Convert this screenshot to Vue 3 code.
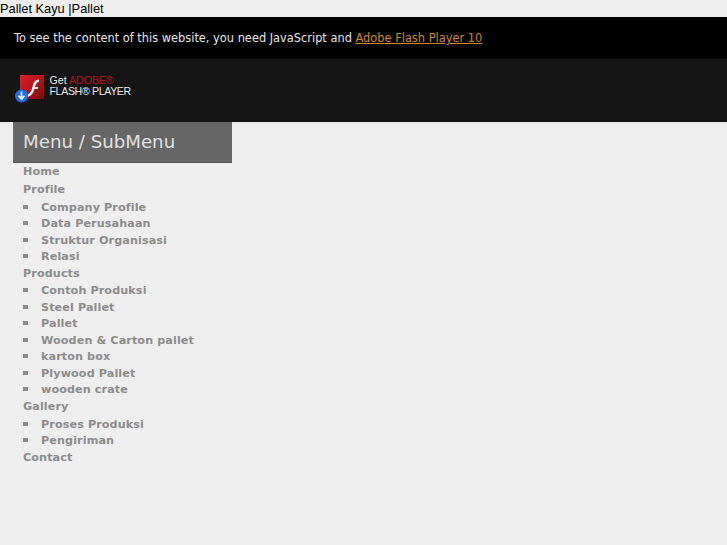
<template>
  <div class="page">
    <div class="title">Pallet Kayu |Pallet</div>
    <div class="notice">
      <p>To see the content of this website, you need JavaScript and <a href="#">Adobe Flash Player 10</a></p>
    </div>
    <div class="getflash">
      <div class="badge">
        <svg class="flash-icon" width="32" height="32" viewBox="0 0 32 32">
          <defs>
            <linearGradient id="flashRed" x1="0" y1="0" x2="1" y2="1">
              <stop offset="0" stop-color="#e0202a" />
              <stop offset="1" stop-color="#7d0a10" />
            </linearGradient>
          </defs>
          <rect x="5" y="1" width="24" height="24" fill="url(#flashRed)" />
          <path d="M24 5.500c-4 0-5.500 3-6.500 7-1 4-2.200 7.500-6 8.500v2c5-.5 7-4.500 8-8h3.500v-2h-3c.7-3 2-4.800 4-5.200z" fill="#f4f0f0" />
          <circle cx="6.500" cy="22" r="6.500" fill="#1f6fe8" />
          <path d="M6.500 17.500v7M3.500 21.800l3 3.200 3-3.200" fill="none" stroke="#fff" stroke-width="1.600" />
        </svg>
        <div class="get-text">
          <div>Get <span class="adobe">ADOBE®</span></div>
          <div class="player-line">FLASH® PLAYER</div>
        </div>
      </div>
    </div>
    <div class="menu">
      <h2>Menu / SubMenu</h2>
      <ul class="top">
        <li v-for="item in menu" :key="item.name">
          <a href="#">{{ item.name }}</a>
          <ul v-if="item.children" class="sub">
            <li v-for="child in item.children" :key="child"><a href="#">{{ child }}</a></li>
          </ul>
        </li>
      </ul>
    </div>
  </div>
</template>

<script setup>
const menu = [
  { name: 'Home' },
  { name: 'Profile', children: ['Company Profile', 'Data Perusahaan', 'Struktur Organisasi', 'Relasi'] },
  { name: 'Products', children: ['Contoh Produksi', 'Steel Pallet', 'Pallet', 'Wooden & Carton pallet', 'karton box', 'Plywood Pallet', 'wooden crate'] },
  { name: 'Gallery', children: ['Proses Produksi', 'Pengiriman'] },
  { name: 'Contact' },
]
</script>

<style>
html, body {
  margin: 0;
  background: #eeeeee;
}
</style>

<style scoped>
.page {
  height: 545px;
  overflow: hidden;
  background: #eeeeee;
  font-family: "DejaVu Sans", sans-serif;
}

.title {
  height: 17px;
  line-height: 17px;
  font-family: "Liberation Sans", sans-serif;
  font-size: 12.8px;
  color: #000;
}

.notice {
  height: 42px;
  background: #000;
  padding-left: 14px;
  box-sizing: border-box;
}

.notice p {
  margin: 0;
  line-height: 43px;
  font-size: 11.4px;
  color: #e6e6e6;
}

.notice a {
  color: #cc8a2a;
}

.getflash {
  height: 63px;
  background: #151515;
  display: flex;
  align-items: center;
  padding-left: 15px;
  padding-bottom: 2px;
  box-sizing: border-box;
}

.badge {
  display: flex;
  align-items: center;
  gap: 2.5px;
}

.flash-icon {
  display: block;
}

.get-text {
  font-family: "Liberation Sans", sans-serif;
  font-size: 10.6px;
  line-height: 11px;
  color: #e8e8e8;
  padding-bottom: 7px;
}

.player-line {
  letter-spacing: -0.35px;
}

.adobe {
  color: #b5121b;
}

.menu {
  width: 219px;
  margin-left: 13px;
}

.menu h2 {
  margin: 0;
  height: 41px;
  line-height: 40px;
  padding-left: 10px;
  box-sizing: border-box;
  background: #666;
  border-bottom: 1px solid #555;
  font-size: 18.2px;
  font-weight: normal;
  color: #e0e0e0;
}

.top, .sub {
  list-style: none;
  margin: 0;
  padding: 0;
}

.top {
  padding-left: 10px;
}

.top a {
  display: block;
  font-size: 11.2px;
  font-weight: bold;
  color: #8c8c8c;
  text-decoration: none;
  letter-spacing: 0.1px;
}

.top > li > a {
  height: 17.8px;
  line-height: 17.8px;
}

.sub li {
  position: relative;
  padding-left: 18px;
  height: 16.5px;
}

.sub li::before {
  content: '';
  position: absolute;
  left: 0;
  top: 6px;
  width: 5px;
  height: 4px;
  background: #8c8c8c;
}

.sub a {
  height: 16.5px;
  line-height: 18px;
}
</style>
